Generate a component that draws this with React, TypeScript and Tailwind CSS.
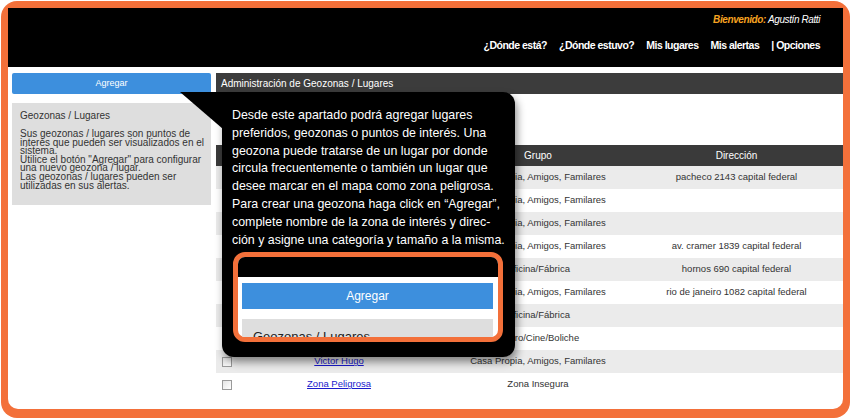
import React from "react";

const rows = [
  { name: "Casa", grupo: "Casa Propia, Amigos, Familares", dir: "pacheco 2143 capital federal" },
  { name: "Casa Juan", grupo: "Casa Propia, Amigos, Familares", dir: "" },
  { name: "Casa Pedro", grupo: "Casa Propia, Amigos, Familares", dir: "" },
  { name: "Casa Sofía", grupo: "Casa Propia, Amigos, Familares", dir: "av. cramer 1839 capital federal" },
  { name: "Oficina", grupo: "Oficina/Fábrica", dir: "hornos 690 capital federal" },
  { name: "Casa Abuela", grupo: "Casa Propia, Amigos, Familares", dir: "rio de janeiro 1082 capital federal" },
  { name: "Fábrica", grupo: "Oficina/Fábrica", dir: "" },
  { name: "Cine", grupo: "Teatro/Cine/Boliche", dir: "" },
  { name: "Victor Hugo", grupo: "Casa Propia, Amigos, Familares", dir: "" },
  { name: "Zona Peligrosa", grupo: "Zona Insegura", dir: "" },
];

const App = () => {
  return (
    <div className="w-[851px] h-[419px] bg-white p-[1px] overflow-hidden">
      <div className="h-full w-full rounded-[16px] bg-[#f3703a] pt-[7px] pl-[7px] pr-[7px] pb-[9px]">
        <div className="relative h-full w-full bg-white rounded-b-[10px] overflow-hidden font-['Liberation_Sans',Arial,sans-serif]">
          {/* Header */}
          <header className="h-[59px] bg-black flex flex-col items-end pr-[23px]">
            <div className="pt-[6px] text-[10px] italic font-bold tracking-[-0.4px] leading-[12px]">
              <span className="text-[#f6a321]">Bienvenido:</span>
              <span className="text-white font-normal"> Agustín Ratti</span>
            </div>
            <nav className="mt-[12px] flex gap-[12px] text-white text-[10.5px] font-bold tracking-[-0.5px]">
              <span>¿Dónde está?</span>
              <span>¿Dónde estuvo?</span>
              <span>Mis lugares</span>
              <span>Mis alertas</span>
              <span>| Opciones</span>
            </nav>
          </header>

          <div className="flex gap-[5px] pl-[4px] pt-[6px]">
            {/* Left column */}
            <aside className="w-[199px] shrink-0">
              <div className="h-[21px] bg-[#3d8fdd] rounded-[2px] flex items-center justify-center text-white text-[9px]">
                Agregar
              </div>
              <div className="mt-[9px] h-[102px] bg-[#dedede] px-[8px] pt-[7px] text-[#333] text-[10px] leading-[8.6px] whitespace-nowrap">
                <p className="leading-[12px]">Geozonas / Lugares</p>
                <p className="mt-[8px]">
                  Sus geozonas / lugares son puntos de
                  <br />
                  interés que pueden ser visualizados en el
                  <br />
                  sistema.
                  <br />
                  Utilice el botón "Agregar" para configurar
                  <br />
                  una nuevo geozona / lugar.
                  <br />
                  Las geozonas / lugares pueden ser
                  <br />
                  utilizadas en sus alertas.
                </p>
              </div>
            </aside>

            {/* Right column */}
            <main className="flex-1">
              <div className="h-[21px] bg-[#3c3c3c] text-white text-[10px] flex items-center pl-[5px]">
                Administración de Geozonas / Lugares
              </div>
              <div className="mt-[51px] text-[9.5px] text-[#333]">
                <div className="h-[21px] bg-[#3a3a3a] text-white text-[10px] flex items-center">
                  <div className="w-[16px]" />
                  <div className="w-[214px]" />
                  <div className="w-[184px] text-center">Grupo</div>
                  <div className="flex-1 text-center">Dirección</div>
                </div>
                {rows.map((r, i) => (
                  <div
                    key={i}
                    className={`h-[23px] flex items-center ${i % 2 === 0 ? "bg-[#ebebeb]" : "bg-white"}`}
                  >
                    <div className="w-[16px] flex justify-end">
                      <div className="w-[10px] h-[10px] border border-[#9a9a9a] bg-gradient-to-br from-[#e4e4e4] to-white" />
                    </div>
                    <div className="w-[214px] text-center">
                      <span className="text-[#1a1acc] underline">{r.name}</span>
                    </div>
                    <div className="w-[184px] text-center whitespace-nowrap">{r.grupo}</div>
                    <div className="flex-1 text-center whitespace-nowrap">{r.dir}</div>
                  </div>
                ))}
              </div>
            </main>
          </div>

          {/* Tooltip */}
          <div className="absolute left-[214px] top-[84px] w-[293px] h-[265px] bg-black rounded-[12px] rounded-tl-none shadow-[2px_5px_8px_rgba(0,0,0,0.45)]">
            <svg className="absolute -left-[42px] top-0" width="43" height="37" viewBox="0 0 43 37">
              <polygon points="0,0 43,0 43,37" fill="#000" />
            </svg>
            <p className="pl-[10px] pt-[15px] text-white text-[12.4px] leading-[17.8px] whitespace-nowrap">
              Desde este apartado podrá agregar lugares
              <br />
              preferidos, geozonas o puntos de interés. Una
              <br />
              geozona puede tratarse de un lugar por donde
              <br />
              circula frecuentemente o también un lugar que
              <br />
              desee marcar en el mapa como zona peligrosa.
              <br />
              Para crear una geozona haga click en “Agregar”,
              <br />
              complete nombre de la zona de interés y direc-
              <br />
              ción y asigne una categoría y tamaño a la misma.
            </p>
            <div className="absolute left-[11px] top-[160px] w-[270px] h-[90px] border-[5px] border-[#f3703a] rounded-[12px] overflow-hidden bg-white">
              <div className="h-[20px] bg-black" />
              <div className="pl-[4px] pr-[5px] pt-[6px]">
                <div className="h-[26px] bg-[#3d8fdd] flex items-center justify-center text-white text-[12px]">
                  Agregar
                </div>
                <div className="mt-[10px] h-[30px] bg-[#dedede] pl-[11px] pt-[8px] text-[13px] text-[#222]">
                  Geozonas / Lugares
                </div>
              </div>
            </div>
          </div>
        </div>
      </div>
    </div>
  );
};

export default App;
